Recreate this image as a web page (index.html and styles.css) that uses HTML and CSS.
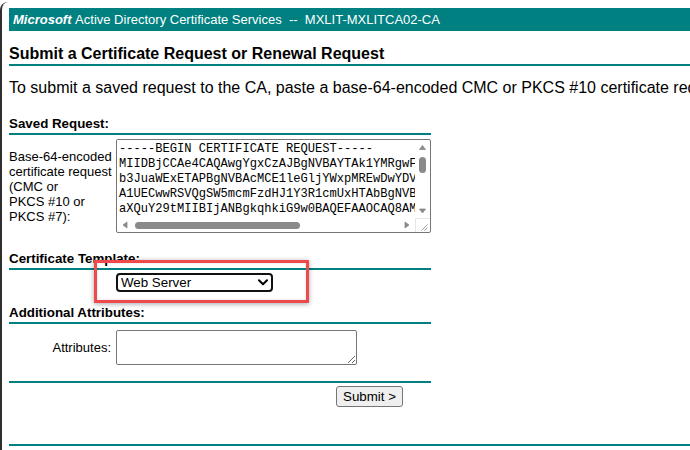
FILE: index.html
```html
<!DOCTYPE html>
<html lang="en">
<head>
<meta charset="utf-8">
<title>Microsoft Active Directory Certificate Services</title>
<link rel="stylesheet" href="styles.css">
</head>
<body>
<div class="window">
  <div class="banner"><span class="brand">Microsoft</span>&nbsp;Active Directory Certificate Services &nbsp;--&nbsp; MXLIT-MXLITCA02-CA</div>

  <h1 class="title">Submit a Certificate Request or Renewal Request</h1>
  <p class="intro">To submit a saved request to the CA, paste a base-64-encoded CMC or PKCS #10 certificate request or PKCS #7 renewal request generated by an external source (such as a Web server) in the Saved Request box.</p>

  <form class="form">
    <section class="group group-saved">
      <h2 class="group-title">Saved Request:</h2>
      <div class="row row-saved">
        <label class="label" for="csr">Base-64-encoded<br>certificate request<br>(CMC or<br>PKCS #10 or<br>PKCS #7):</label>
        <div class="scrollbox">
          <textarea id="csr" class="csr" wrap="off" spellcheck="false">-----BEGIN CERTIFICATE REQUEST-----
MIIDBjCCAe4CAQAwgYgxCzAJBgNVBAYTAk1YMRgwFgYDVQQIDA9CYWphIENhbGlm
b3JuaWExETAPBgNVBAcMCE1leGljYWxpMREwDwYDVQQKDAhNWExJVCBTQTEaMBgG
A1UECwwRSVQgSW5mcmFzdHJ1Y3R1cmUxHTAbBgNVBAMMFHd3dy5teGxpdC1leGFt
aXQuY29tMIIBIjANBgkqhkiG9w0BAQEFAAOCAQ8AMIIBCgKCAQEAxK3vQm8pL2Rt
7fN2cYhW0aJq5sTg3LbVxUe9oPzR1kDmH4iEw8nC6yFtQ2vKjZ0pXaS7uGdBlM5r
Qx1Wb9cJt3Hn6LkPz0VsR4eYm2GaDf8UoTi5NjCqE7wKhXlSpB1AgvOyM3rZnF0u
k2Tg8YvLs6PbQ9eHcJwR1mXnAoUd4ZtKi7fG0yEqSjBr5VhCp3MlWaNx9Iu2Do6z
H5sNq0tLb8KvYe2RgWc4Jx1ZmPd7UoAfXi3TnEh9BkGsQ6rVl0wCyMj2Sa5Ft8Ip
2QIDAQABoDgwNgYJKoZIhvcNAQkOMSkwJzAlBgNVHREEHjAcghR3d3cubXhsaXQt
ZXhhbXBsZS5jb22CBG14bGl0MA0GCSqGSIb3DQEBCwUAA4IBAQBc7Hq2Nf0Ld8Ks
Vr3mYw9XaT1Ge6PjU4oZbCi5SnQx2RhFt0Lk7Dv8MuEg3WcJp6YsIo1BlNaZf9Tq
Ue4Wm0Xk2Rj7Hd1Ys5Nb3Qc8Vt6Lg9Fp0Za4Mo2Ic7Ks1Gw3Jh5Pe9Dx6Ub8Tn
-----END CERTIFICATE REQUEST-----</textarea>
          <div class="vbar" aria-hidden="true">
            <svg class="arrow" width="15" height="14" viewBox="0 0 15 14"><path d="M4.5 9.5 L7.5 5.5 L10.5 9.5 Z" fill="#8a8a8a" stroke="#8a8a8a" stroke-width="0.8" stroke-linejoin="round"/></svg>
            <div class="vtrack"><div class="vthumb"></div></div>
            <svg class="arrow" width="15" height="14" viewBox="0 0 15 14"><path d="M4.5 5 L7.5 9 L10.5 5 Z" fill="#8a8a8a" stroke="#8a8a8a" stroke-width="0.8" stroke-linejoin="round"/></svg>
          </div>
          <div class="hbar" aria-hidden="true">
            <svg class="arrow" width="16" height="14" viewBox="0 0 16 14"><path d="M10 4 L6 7 L10 10 Z" fill="#8a8a8a" stroke="#8a8a8a" stroke-width="0.8" stroke-linejoin="round"/></svg>
            <div class="htrack"><div class="hthumb"></div></div>
            <svg class="arrow" width="16" height="14" viewBox="0 0 16 14"><path d="M6 4 L10 7 L6 10 Z" fill="#8a8a8a" stroke="#8a8a8a" stroke-width="0.8" stroke-linejoin="round"/></svg>
          </div>
          <div class="corner" aria-hidden="true">
            <svg width="15" height="14" viewBox="0 0 15 14"><path d="M12.5 6.5 L6.5 12.5 M12.5 9.5 L9.5 12.5" stroke="#9a9a9a" stroke-width="1" fill="none"/></svg>
          </div>
        </div>
      </div>
    </section>

    <section class="group group-template">
      <h2 class="group-title">Certificate Template:</h2>
      <div class="row row-template">
        <span class="label"></span>
        <span class="select-wrap">
          <select class="select" name="template">
            <option>Web Server</option>
            <option>User</option>
            <option>Administrator</option>
          </select>
          <svg class="chevron" width="10" height="7" viewBox="0 0 10 7" aria-hidden="true"><path d="M1 1.2 L5 5.2 L9 1.2" fill="none" stroke="#000" stroke-width="2" stroke-linecap="round" stroke-linejoin="round"/></svg>
        </span>
      </div>
      <div class="callout" aria-hidden="true"></div>
    </section>

    <section class="group group-attrs">
      <h2 class="group-title">Additional Attributes:</h2>
      <div class="row row-attrs">
        <label class="label label-right" for="attrs">Attributes:</label>
        <textarea id="attrs" class="attrs"></textarea>
      </div>
    </section>

    <div class="rule"></div>
    <div class="row row-submit">
      <span class="label"></span>
      <button type="submit" class="submit">Submit &gt;</button>
    </div>
  </form>

  <div class="rule rule-full"></div>
</div>
</body>
</html>
```

FILE: styles.css
```css
html, body {
  margin: 0;
  padding: 0;
  background: #fff;
  overflow: hidden;
}

body {
  font-family: "Liberation Sans", Arial, sans-serif;
  color: #000;
}

.window {
  margin-top: 2px;
  min-height: 448px;
  box-sizing: border-box;
  border-left: 2px solid #2f2f2f;
  border-top-left-radius: 8px;
  padding: 6px 0 0 7px;
}

.banner {
  height: 23px;
  background: #008080;
  color: #fff;
  font-size: 13px;
  display: flex;
  align-items: center;
  padding-left: 4px;
  white-space: pre;
}

.brand {
  font-weight: bold;
  font-style: italic;
}

.title {
  margin: 14px 0 0;
  font-size: 16px;
  line-height: 18px;
  font-weight: bold;
  padding-bottom: 1px;
  border-bottom: 2px solid #008080;
}

.intro {
  margin: 13px 0 0;
  font-size: 16px;
  line-height: 18px;
  white-space: nowrap;
  overflow: hidden;
}

.form {
  width: 422px;
  margin-top: 19px;
}

.group {
  position: relative;
}

.group-title {
  margin: 0;
  font-size: 13.33px;
  line-height: 15px;
  font-weight: bold;
  padding-bottom: 2px;
  border-bottom: 2px solid #008080;
}

.row {
  display: grid;
  grid-template-columns: 107px 315px;
  align-items: center;
}

.label {
  font-size: 13px;
  line-height: 15px;
}

.label-right {
  text-align: right;
  padding-right: 5px;
}

.row-saved {
  margin-top: 4px;
}

/* textarea with drawn scrollbars */
.scrollbox {
  box-sizing: border-box;
  width: 315px;
  height: 94px;
  border: 1px solid #767676;
  border-radius: 2px;
  background: #fff;
  display: grid;
  grid-template-columns: 298px 15px;
  grid-template-rows: 78px 14px;
  overflow: hidden;
}

.csr {
  box-sizing: border-box;
  width: 298px;
  height: 78px;
  margin: 0;
  padding: 2px;
  border: 0;
  outline: none;
  resize: none;
  overflow: hidden;
  font-family: "Liberation Mono", "DejaVu Sans Mono", monospace;
  font-size: 12.1px;
  line-height: 15px;
  color: #000;
  background: #fff;
}

.vbar {
  display: flex;
  flex-direction: column;
}

.vtrack {
  flex: 1;
  padding: 3px 4px 0;
}

.vthumb {
  width: 7px;
  height: 16px;
  border-radius: 4px;
  background: #8a8a8a;
}

.hbar {
  display: flex;
  align-items: stretch;
}

.htrack {
  flex: 1;
  padding: 4px 0 0 2px;
}

.hthumb {
  width: 165px;
  height: 7px;
  border-radius: 4px;
  background: #8a8a8a;
}

.arrow {
  display: block;
  flex: none;
}

.corner {
  border-top: 1px solid #e6e6e6;
  border-left: 1px solid #e6e6e6;
  box-sizing: border-box;
}

.corner svg {
  display: block;
  margin: -1px 0 0 -1px;
}

.group-template {
  margin-top: 18px;
}

.row-template {
  margin-top: 3px;
}

.select-wrap {
  position: relative;
  display: inline-block;
  width: 157px;
  height: 19px;
}

.select {
  appearance: none;
  -webkit-appearance: none;
  box-sizing: border-box;
  width: 157px;
  height: 19px;
  margin: 0;
  padding: 0 0 0 3px;
  border: 2px solid #111;
  border-radius: 4px;
  background: #fff;
  color: #000;
  font-family: "Liberation Sans", Arial, sans-serif;
  font-size: 13.33px;
  line-height: 15px;
}

.chevron {
  position: absolute;
  right: 5px;
  top: 6px;
  pointer-events: none;
}

.callout {
  position: absolute;
  left: 85px;
  top: 9px;
  width: 215px;
  height: 43px;
  box-sizing: border-box;
  border: 3px solid #ee4a4d;
  box-shadow: 0 1px 5px rgba(0, 0, 0, 0.35), inset 0 0 3px rgba(0, 0, 0, 0.15);
  pointer-events: none;
}

.group-attrs {
  margin-top: 13px;
}

.row-attrs {
  margin-top: 6px;
}

.attrs {
  box-sizing: border-box;
  width: 241px;
  height: 35px;
  margin: 0;
  padding: 2px;
  border: 1px solid #767676;
  border-radius: 2px;
  font-family: "Liberation Mono", monospace;
  font-size: 12.1px;
  background: #fff;
  resize: both;
}

.rule {
  height: 2px;
  background: #008080;
  margin-top: 16px;
}

.row-submit {
  margin-top: 3px;
}

.submit {
  justify-self: end;
  margin: 0 28px 0 0;
  height: 21px;
  padding: 0 6px;
  border: 1px solid #767676;
  border-radius: 3px;
  background: #efefef;
  color: #000;
  font-family: "Liberation Sans", Arial, sans-serif;
  font-size: 13.33px;
}

.rule-full {
  margin-top: 37px;
}
```
